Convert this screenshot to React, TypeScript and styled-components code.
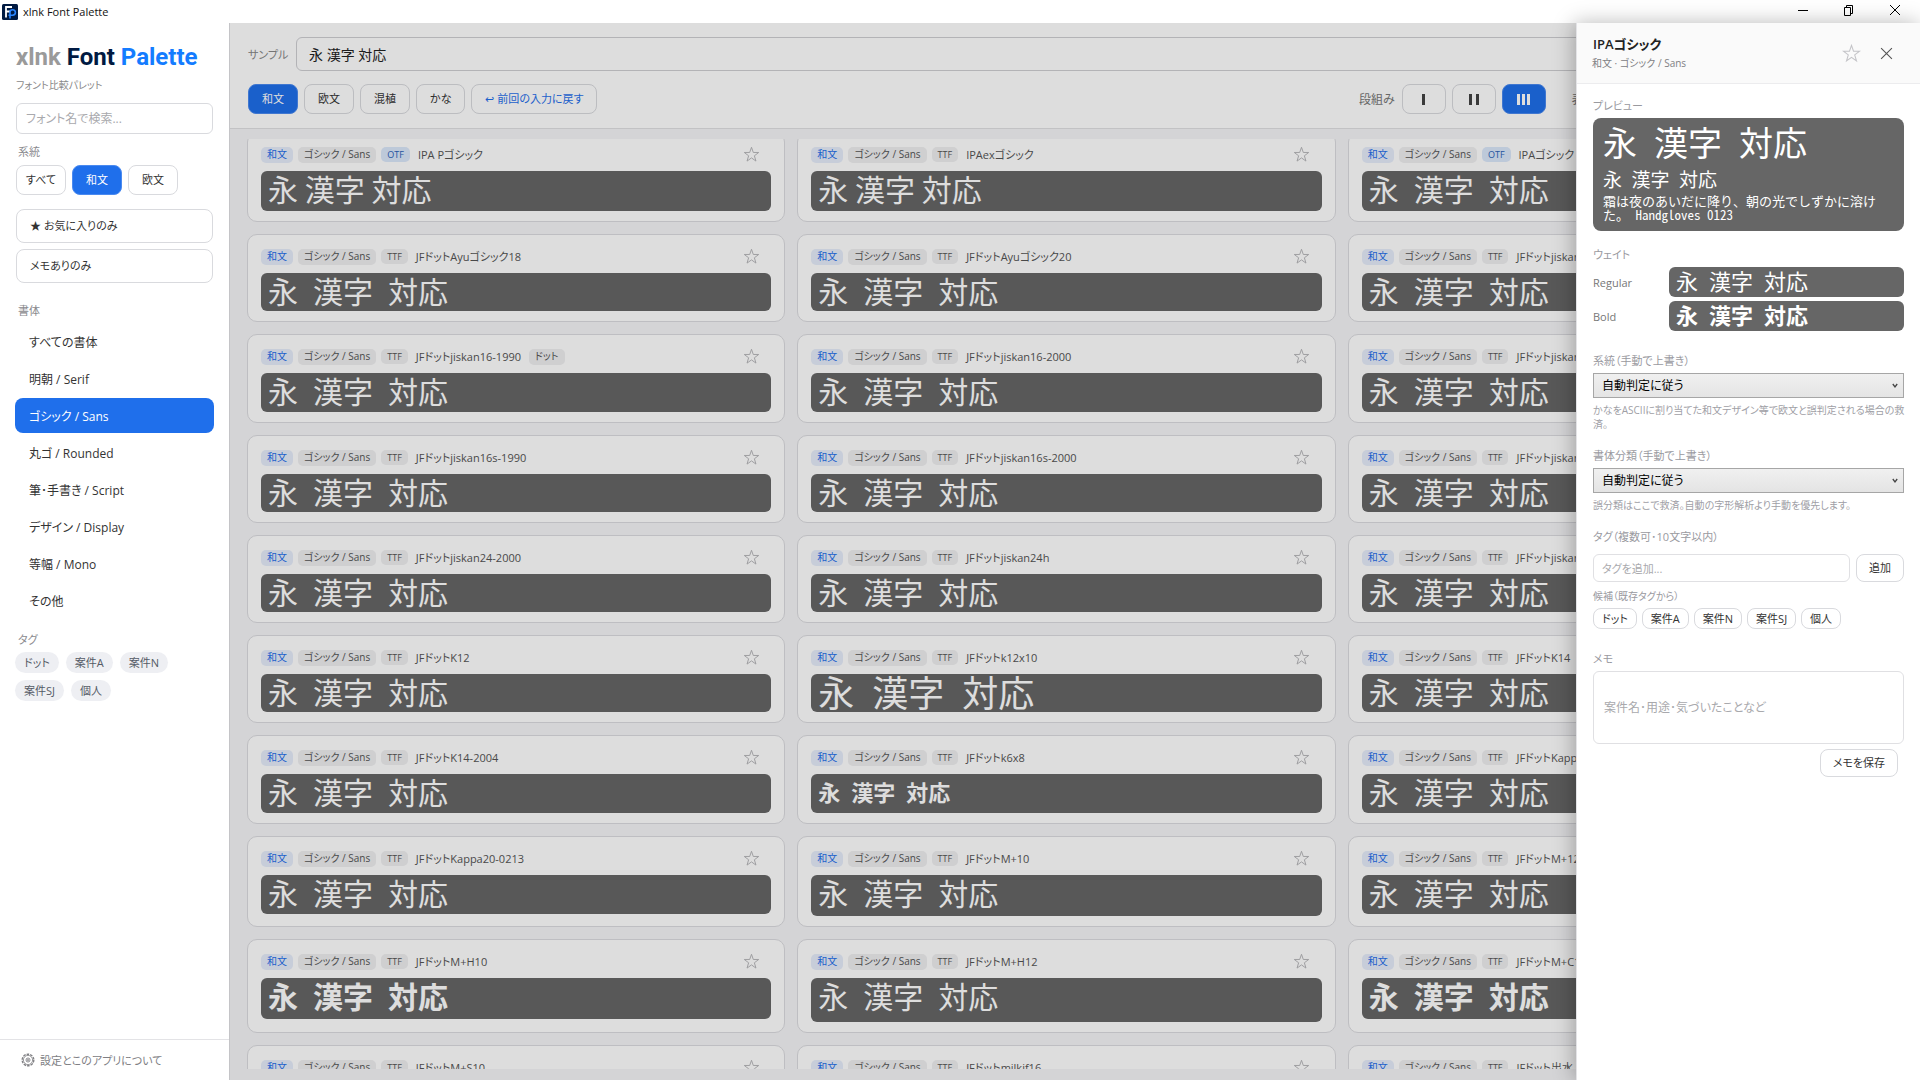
import React, { useLayoutEffect, useRef } from 'react';
import styled, { createGlobalStyle, css } from 'styled-components';

const ui = `'Open Sans', 'Noto Sans CJK JP', sans-serif`;
const monoSample = `'Noto Sans Mono CJK JP', 'Noto Sans CJK JP', sans-serif`;
const proportionalSample = `'Noto Sans CJK JP', sans-serif`;

const GlobalStyle = createGlobalStyle`
  *, *::before, *::after { box-sizing: border-box; }
  body { margin: 0; background: #fff; overflow: hidden; }
  body, button, input, select, textarea {
    font-family: ${ui};
    font-feature-settings: 'palt';
  }
  h1, h2, p { margin: 0; }
`;

/* ---------- window ---------- */

const Window = styled.div`
  display: flex;
  flex-direction: column;
  height: 100vh;
  color: #333;
  font-size: 12px;
`;

const TitleBar = styled.header`
  display: flex;
  align-items: center;
  flex: none;
  height: 23px;
  padding: 0 2px;
  gap: 5px;
  font-size: 11px;
  color: #111;
`;

const WindowButtons = styled.div`
  display: flex;
  margin-left: auto;
`;

const WindowButton = styled.button`
  display: grid;
  place-items: center;
  width: 46px;
  height: 23px;
  padding: 0 0 3px;
  border: 0;
  background: none;
  color: #000;
`;

const Body = styled.div`
  position: relative;
  display: flex;
  flex: 1;
  min-height: 0;
`;

/* ---------- shared controls ---------- */

const Button = styled.button<{ $active?: boolean; $accent?: boolean }>`
  flex: none;
  height: 30px;
  padding: 0 13px;
  border: 1px solid #d9dade;
  border-radius: 8px;
  background: #fff;
  color: #333;
  font-size: 11px;
  line-height: 16px;
  white-space: nowrap;
  ${p => p.$accent && css`color: #1f6feb;`}
  ${p => p.$active && css`
    border-color: #4a8af0;
    background: #1f6feb;
    color: #fff;
  `}
`;

const Label = styled.div`
  font-size: 11px;
  line-height: 16px;
  color: #8a8a8e;
`;

/* ---------- sidebar ---------- */

const Sidebar = styled.aside`
  display: flex;
  flex-direction: column;
  flex: none;
  width: 230px;
  border-right: 1px solid #e3e3e6;
  background: #fff;
`;

const SidebarMain = styled.div`
  flex: 1;
  min-height: 0;
  padding: 20px 15px 0;
`;

const Brand = styled.h1`
  padding-left: 1px;
  font-family: Roboto, sans-serif;
  font-size: 24px;
  line-height: 28px;
  font-weight: 700;
  color: #9a9a9a;
  white-space: nowrap;
`;
const BrandDark = styled.span`color: #001a42;`;
const BrandBlue = styled.span`color: #147cff;`;

const Tagline = styled.p`
  padding-left: 1px;
  margin-top: 6px;
  font-size: 10px;
  line-height: 16px;
  color: #888;
`;

const SearchBox = styled.input`
  display: block;
  width: calc(100% - 2px);
  height: 31px;
  margin: 10px 1px;
  padding: 0 9px;
  border: 1px solid #d9dade;
  border-radius: 6px;
  outline: 0;
  font-size: 12px;
  &::placeholder { color: #a9a9ad; opacity: 1; }
`;

const SideLabel = styled(Label)`padding-left: 3px;`;

const ScriptRow = styled.div`
  display: grid;
  grid-template-columns: repeat(3, 50px);
  gap: 6px;
  margin: 5px 1px 14px;
  ${Button} { padding: 0; }
`;

const FilterButton = styled(Button)`
  display: block;
  width: calc(100% - 2px);
  height: 34px;
  margin: 0 1px 6px;
  text-align: left;
`;

const CategoryHeading = styled(SideLabel)`margin-top: 20px;`;

const CategoryList = styled.nav`
  display: flex;
  flex-direction: column;
  gap: 2px;
  margin: 5px 0 14px;
`;

const CategoryButton = styled.button<{ $active?: boolean }>`
  height: 35px;
  padding: 0 14px;
  border: 0;
  border-radius: 8px;
  background: ${p => (p.$active ? '#1f6feb' : 'transparent')};
  color: ${p => (p.$active ? '#fff' : '#333')};
  font-size: 12px;
  text-align: left;
`;

const TagCloud = styled.div`
  display: flex;
  flex-wrap: wrap;
  gap: 7px;
  margin-top: 4px;
`;

const CloudTag = styled.button`
  height: 21px;
  padding: 0 9px;
  border: 0;
  border-radius: 11px;
  background: #eeeff3;
  color: #555b66;
  font-size: 11px;
  line-height: 20px;
`;

const SettingsButton = styled.button`
  display: flex;
  align-items: center;
  gap: 5px;
  flex: none;
  height: 41px;
  padding: 0 21px;
  border: 0;
  border-top: 1px solid #e3e3e6;
  background: none;
  color: #808084;
  font-size: 11px;
`;

/* ---------- main ---------- */

const Main = styled.main`
  display: flex;
  flex-direction: column;
  flex: 1;
  min-width: 0;
  background: #f5f5f7;
`;

const Toolbar = styled.div`
  display: flex;
  flex-direction: column;
  gap: 13px;
  flex: none;
  height: 106px;
  padding: 14px 18px 0;
  border-bottom: 1px solid #e0e0e3;
  background: #fff;
`;

const ToolRow = styled.div`
  display: flex;
  align-items: center;
  gap: 6px;
`;

const SampleLabel = styled.label`
  flex: none;
  width: 42px;
  font-size: 11px;
  white-space: nowrap;
  color: #888;
`;

const SampleInput = styled.input`
  flex: 1;
  min-width: 0;
  height: 34px;
  padding: 0 12px;
  border: 1px solid #cfcfd3;
  border-radius: 6px;
  outline: 0;
  font-size: 14px;
  color: #222;
`;

const ColumnTools = styled.div`
  display: flex;
  align-items: center;
  gap: 6px;
  width: 543px;
  margin-left: auto;
  color: #777;
`;

const ColumnButton = styled(Button)`
  display: grid;
  place-items: center;
  width: 44px;
  padding: 0;
  color: ${p => (p.$active ? '#fff' : '#444')};
`;

const ToolText = styled.span<{ $far?: boolean }>`
  margin-left: ${p => (p.$far ? '20px' : '0')};
  padding-right: 1px;
`;

const Scroller = styled.div`
  flex: 1;
  min-height: 0;
  margin: 10px 0 11px;
  padding: 0 34px 0 17px;
  overflow: hidden;
`;

const CardGrid = styled.div`
  display: grid;
  grid-template-columns: repeat(3, minmax(0, 1fr));
  gap: 12px;
`;

const Card = styled.article`
  padding: 13px 13px 10px;
  border: 1px solid #dcdce0;
  border-radius: 10px;
  background: #fff;
`;

const CardHead = styled.div`
  display: flex;
  align-items: center;
  height: 17px;
  margin-bottom: 8px;
`;

const Chip = styled.span<{ $tone?: 'blue' | 'otf'; $small?: boolean }>`
  flex: none;
  height: ${p => (p.$small ? '15px' : '16px')};
  padding: 0 6px;
  margin-right: ${p => (p.$small ? '8px' : '5px')};
  border-radius: 5px;
  background: #efeff1;
  color: #555;
  font-size: ${p => (p.$small ? '9px' : '10px')};
  line-height: 15px;
  white-space: nowrap;
  ${p => p.$tone === 'blue' && css`background: #e6edfb; color: #1f6feb;`}
  ${p => p.$tone === 'otf' && css`background: #dbe8fb; color: #2a62b8;`}
  & + &:nth-child(3) { margin-left: 3px; }
`;

const FontName = styled.span`
  margin-right: 8px;
  color: #555;
  font-size: 11px;
  line-height: 16px;
  white-space: nowrap;
`;

const StarButton = styled.button`
  display: grid;
  place-items: center;
  width: 18px;
  height: 18px;
  margin: 0 11px 0 auto;
  padding: 0;
  border: 0;
  background: none;
  color: #b4b4b8;
`;

const Sample = styled.div<{ $h: number; $size?: number; $weight?: number; $proportional?: boolean }>`
  height: ${p => p.$h}px;
  padding: 0 7px;
  border-radius: 6px;
  background: #666;
  color: #fff;
  font-family: ${p => (p.$proportional ? proportionalSample : monoSample)};
  font-feature-settings: normal;
  font-size: ${p => p.$size ?? 30}px;
  font-weight: ${p => p.$weight ?? 400};
  line-height: 34px;
  white-space: nowrap;
`;

/* ---------- drawer ---------- */

const Scrim = styled.div`
  position: absolute;
  inset: 0 0 0 229px;
  background: rgba(0, 0, 0, 0.133);
`;

const Drawer = styled.aside`
  position: absolute;
  top: 0;
  right: 0;
  bottom: 0;
  width: 344px;
  border-left: 1px solid #e3e3e6;
  background: #fff;
  box-shadow: -2px 0 20px rgba(0, 0, 0, 0.28);
`;

const DrawerHead = styled.div`
  display: flex;
  align-items: center;
  height: 61px;
  padding: 0 24px 0 15px;
  border-bottom: 1px solid #ececee;
  background: #fafafa;
`;

const DrawerTitles = styled.div`flex: 1;`;

const DrawerTitle = styled.h2`
  padding-left: 1px;
  font-size: 13px;
  line-height: 19px;
  font-weight: 600;
  color: #222;
`;

const DrawerSub = styled.p`
  font-size: 10px;
  line-height: 18px;
  color: #808084;
`;

const IconButton = styled.button<{ $faint?: boolean }>`
  display: grid;
  place-items: center;
  width: 20px;
  height: 20px;
  margin-left: 15px;
  padding: 0;
  border: 0;
  background: none;
  color: ${p => (p.$faint ? '#c4c4c8' : '#555')};
`;

const DrawerBody = styled.div`
  display: flex;
  flex-direction: column;
  padding: 14px 16px;
`;

const DrawerLabel = styled.label`
  display: block;
  font-size: 11px;
  line-height: 16px;
  color: #9a9a9f;
`;

const PreviewBox = styled.div`
  height: 113px;
  margin: 4px 0 16px;
  padding: 3px 10px;
  border-radius: 8px;
  background: #666;
  color: #fff;
  font-family: ${monoSample};
  font-feature-settings: normal;
`;

const PreviewLarge = styled.p`
  font-size: 34px;
  line-height: 42px;
`;
const PreviewMedium = styled.p`
  font-size: 19px;
  line-height: 31px;
`;
const PreviewSmall = styled.p`
  font-size: 13px;
  line-height: 14px;
`;

const WeightRow = styled.div`
  display: grid;
  grid-template-columns: 76px 1fr;
  align-items: center;
  margin-top: 4px;
  color: #777;
  font-size: 11px;
`;

const WeightSample = styled(Sample)`line-height: 27px;`;

const Section = styled.section<{ $wide?: boolean }>`
  margin-top: ${p => (p.$wide ? '22px' : '17px')};
`;

const SelectWrap = styled.div`
  display: grid;
  align-items: center;
  justify-items: end;
  margin: 4px 0 5px;
  & > * { grid-area: 1 / 1; }
  svg { margin-right: 6px; pointer-events: none; }
`;

const Select = styled.select`
  width: 100%;
  height: 25px;
  padding: 0 8px;
  border: 1px solid #a6a6a6;
  border-radius: 0;
  appearance: none;
  background: linear-gradient(#f0f0f0, #e4e4e4);
  color: #000;
  font-size: 12px;
`;

const Hint = styled.p`
  margin-right: -6px;
  font-size: 10px;
  line-height: 14px;
  color: #a0a0a6;
`;

const AddRow = styled.div`
  display: flex;
  gap: 6px;
  margin: 9px 0 6px;
`;

const TagInput = styled.input`
  flex: 1;
  min-width: 0;
  height: 28px;
  padding: 0 8px;
  border: 1px solid #e0e0e3;
  border-radius: 6px;
  outline: 0;
  font-size: 11px;
  &::placeholder { color: #a9a9ad; opacity: 1; }
`;

const SmallButton = styled(Button)`
  height: 28px;
  padding: 0 12px;
`;

const SuggestLabel = styled(DrawerLabel).attrs({ as: 'div' })`
  font-size: 10px;
`;

const SuggestRow = styled.div`
  display: flex;
  gap: 5px;
  margin-top: 4px;
`;

const SuggestTag = styled(Button)`
  height: 21px;
  padding: 0 8px;
  line-height: 18px;
`;

const Memo = styled.textarea`
  display: block;
  width: 100%;
  height: 73px;
  margin: 4px 0 5px;
  padding: 27px 10px 0;
  border: 1px solid #e0e0e3;
  border-radius: 6px;
  outline: 0;
  resize: none;
  font-size: 12px;
  line-height: 18px;
  &::placeholder { color: #a9a9ad; opacity: 1; }
`;

const SaveRow = styled.div`
  display: flex;
  justify-content: flex-end;
  padding-right: 6px;
`;

/* ---------- icons ---------- */

const AppIcon = () => (
  <svg width="16" height="16" viewBox="0 0 16 16" aria-hidden="true">
    <rect width="16" height="16" rx="1.5" fill="#001a42" />
    <path d="M4 13.5V3h6M4 7.5h4" fill="none" stroke="#fff" strokeWidth="1.8" />
    <path d="M8 14.5V8.2c0-1.5 1-2.4 2.6-2.4S13.400 7 13.400 8.600 12.200 11.200 10.600 11.200H6.500" fill="none" stroke="#2a86ff" strokeWidth="1.600" />
  </svg>
);

const Star = ({ size }: { size: number }) => (
  <svg width={size} height={size} viewBox="0 0 16 16" fill="none" stroke="currentColor" strokeWidth=".9" aria-hidden="true">
    <path d="M8 1.200l1.700 4.900h5.100l-4.100 3.100 1.500 5L8 11.200l-4.200 3 1.500-5-4.100-3.100h5.100z" />
  </svg>
);

const Bars = ({ count }: { count: number }) => {
  const pitch = count === 2 ? 7 : 5;
  const width = (count - 1) * pitch + 3;
  return (
    <svg width={width} height="11" viewBox={`0 0 ${width} 11`} fill="currentColor" aria-hidden="true">
      {Array.from({ length: count }, (_, i) => <rect key={i} x={i * pitch} width="3" height="11" />)}
    </svg>
  );
};

const Gear = () => (
  <svg width="14" height="14" viewBox="0 0 14 14" fill="none" stroke="currentColor" aria-hidden="true">
    <circle cx="7" cy="7" r="5.800" strokeWidth="1.400" strokeDasharray="2.600 1" />
    <circle cx="7" cy="7" r="4.600" strokeWidth=".8" />
    <circle cx="7" cy="7" r="2" strokeWidth=".9" />
    <circle cx="7" cy="7" r=".5" fill="currentColor" />
  </svg>
);

const Chevron = () => (
  <svg width="6" height="6" viewBox="0 0 6 6" fill="none" stroke="#444" strokeWidth="1.300" aria-hidden="true">
    <path d="M.8 1l2.200 3L5.200 1" />
  </svg>
);

const Cross = ({ size }: { size: number }) => (
  <svg width={size} height={size} viewBox="0 0 12 12" stroke="currentColor" aria-hidden="true">
    <path d="M1 1l10 10M11 1L1 11" />
  </svg>
);

/* ---------- data ---------- */

type FontItem = {
  name: string;
  h: number;
  format?: 'OTF';
  tag?: string;
  proportional?: boolean;
  size?: number;
  weight?: number;
};

const fonts: FontItem[] = [
  { name: 'IPA Pゴシック', h: 40, format: 'OTF', proportional: true },
  { name: 'IPAexゴシック', h: 40, proportional: true },
  { name: 'IPAゴシック', h: 40, format: 'OTF' },
  { name: 'JFドットAyuゴシック18', h: 38 },
  { name: 'JFドットAyuゴシック20', h: 38 },
  { name: 'JFドットjiskan16', h: 38 },
  { name: 'JFドットjiskan16-1990', h: 39, tag: 'ドット' },
  { name: 'JFドットjiskan16-2000', h: 39 },
  { name: 'JFドットjiskan16s', h: 39 },
  { name: 'JFドットjiskan16s-1990', h: 38 },
  { name: 'JFドットjiskan16s-2000', h: 38 },
  { name: 'JFドットjiskan24', h: 38 },
  { name: 'JFドットjiskan24-2000', h: 38 },
  { name: 'JFドットjiskan24h', h: 38 },
  { name: 'JFドットjiskan24s', h: 38 },
  { name: 'JFドットK12', h: 38 },
  { name: 'JFドットk12x10', h: 38, size: 36 },
  { name: 'JFドットK14', h: 38 },
  { name: 'JFドットK14-2004', h: 39 },
  { name: 'JFドットk6x8', h: 39, size: 22, weight: 700 },
  { name: 'JFドットKappa20', h: 39 },
  { name: 'JFドットKappa20-0213', h: 39 },
  { name: 'JFドットM+10', h: 41 },
  { name: 'JFドットM+12', h: 39 },
  { name: 'JFドットM+H10', h: 41, weight: 700 },
  { name: 'JFドットM+H12', h: 44 },
  { name: 'JFドットM+C10', h: 41, weight: 700 },
  { name: 'JFドットM+S10', h: 41 },
  { name: 'JFドットmilkjf16', h: 41 },
  { name: 'JFドット出水', h: 41 },
];

const categories = ['すべての書体', '明朝 / Serif', 'ゴシック / Sans', '丸ゴ / Rounded', '筆･手書き / Script', 'デザイン / Display', '等幅 / Mono', 'その他'];
const tags = ['ドット', '案件A', '案件N', '案件SJ', '個人'];
const sample = '永 漢字 対応';

const FontCard = ({ font }: { font: FontItem }) => (
  <Card>
    <CardHead>
      <Chip $tone="blue">和文</Chip>
      <Chip>ゴシック / Sans</Chip>
      <Chip $small $tone={font.format ? 'otf' : undefined}>{font.format ?? 'TTF'}</Chip>
      <FontName>{font.name}</FontName>
      {font.tag && <Chip>{font.tag}</Chip>}
      <StarButton aria-label="お気に入り"><Star size={17} /></StarButton>
    </CardHead>
    <Sample $h={font.h} $size={font.size} $weight={font.weight} $proportional={font.proportional}>
      {sample}
    </Sample>
  </Card>
);

export default function App() {
  const scroller = useRef<HTMLDivElement>(null);

  useLayoutEffect(() => {
    if (scroller.current) scroller.current.scrollTop = 7;
  }, []);

  return (
    <>
      <GlobalStyle />
      <Window>
        <TitleBar>
          <AppIcon />
          <span>xlnk Font Palette</span>
          <WindowButtons>
            <WindowButton aria-label="最小化">
              <svg width="10" height="10" stroke="currentColor"><path d="M0 5.500h10" /></svg>
            </WindowButton>
            <WindowButton aria-label="元に戻す">
              <svg width="10" height="11" fill="none" stroke="currentColor"><path d="M.5 2.500h6v8h-6zM2.500 2.500v-2h6v8h-2" /></svg>
            </WindowButton>
            <WindowButton aria-label="閉じる"><Cross size={12} /></WindowButton>
          </WindowButtons>
        </TitleBar>

        <Body>
          <Sidebar>
            <SidebarMain>
              <Brand>xlnk <BrandDark>Font</BrandDark> <BrandBlue>Palette</BrandBlue></Brand>
              <Tagline>フォント比較パレット</Tagline>
              <SearchBox aria-label="フォント名" placeholder="フォント名で検索..." />
              <SideLabel>系統</SideLabel>
              <ScriptRow>
                <Button>すべて</Button>
                <Button $active>和文</Button>
                <Button>欧文</Button>
              </ScriptRow>
              <FilterButton>★ お気に入りのみ</FilterButton>
              <FilterButton>メモありのみ</FilterButton>
              <CategoryHeading>書体</CategoryHeading>
              <CategoryList>
                {categories.map(c => (
                  <CategoryButton key={c} $active={c.startsWith('ゴシック')}>{c}</CategoryButton>
                ))}
              </CategoryList>
              <SideLabel>タグ</SideLabel>
              <TagCloud>
                {tags.map(t => <CloudTag key={t}>{t}</CloudTag>)}
              </TagCloud>
            </SidebarMain>
            <SettingsButton><Gear />設定とこのアプリについて</SettingsButton>
          </Sidebar>

          <Main>
            <Toolbar>
              <ToolRow>
                <SampleLabel htmlFor="sample">サンプル</SampleLabel>
                <SampleInput id="sample" defaultValue={sample} />
              </ToolRow>
              <ToolRow>
                <Button $active>和文</Button>
                <Button>欧文</Button>
                <Button>混植</Button>
                <Button>かな</Button>
                <Button $accent>↩ 前回の入力に戻す</Button>
                <ColumnTools>
                  <ToolText>段組み</ToolText>
                  <ColumnButton aria-label="1列"><Bars count={1} /></ColumnButton>
                  <ColumnButton aria-label="2列"><Bars count={2} /></ColumnButton>
                  <ColumnButton aria-label="3列" $active><Bars count={3} /></ColumnButton>
                  <ToolText $far>表示</ToolText>
                </ColumnTools>
              </ToolRow>
            </Toolbar>
            <Scroller ref={scroller}>
              <CardGrid>
                {fonts.map(f => <FontCard key={f.name} font={f} />)}
              </CardGrid>
            </Scroller>
          </Main>

          <Scrim />

          <Drawer>
            <DrawerHead>
              <DrawerTitles>
                <DrawerTitle>IPAゴシック</DrawerTitle>
                <DrawerSub>和文 · ゴシック / Sans</DrawerSub>
              </DrawerTitles>
              <IconButton $faint aria-label="お気に入り"><Star size={19} /></IconButton>
              <IconButton aria-label="閉じる"><Cross size={13} /></IconButton>
            </DrawerHead>
            <DrawerBody>
              <DrawerLabel as="div">プレビュー</DrawerLabel>
              <PreviewBox>
                <PreviewLarge>{sample}</PreviewLarge>
                <PreviewMedium>{sample}</PreviewMedium>
                <PreviewSmall>霜は夜のあいだに降り、朝の光でしずかに溶けた。 Handgloves 0123</PreviewSmall>
              </PreviewBox>
              <DrawerLabel as="div">ウェイト</DrawerLabel>
              <WeightRow>Regular<WeightSample $h={30} $size={22}>{sample}</WeightSample></WeightRow>
              <WeightRow>Bold<WeightSample $h={30} $size={22} $weight={700}>{sample}</WeightSample></WeightRow>

              <Section $wide>
                <DrawerLabel htmlFor="script">系統（手動で上書き）</DrawerLabel>
                <SelectWrap>
                  <Select id="script"><option>自動判定に従う</option></Select>
                  <Chevron />
                </SelectWrap>
                <Hint>かなをASCIIに割り当てた和文デザイン等で欧文と誤判定される場合の救済。</Hint>
              </Section>

              <Section>
                <DrawerLabel htmlFor="category">書体分類（手動で上書き）</DrawerLabel>
                <SelectWrap>
                  <Select id="category"><option>自動判定に従う</option></Select>
                  <Chevron />
                </SelectWrap>
                <Hint>誤分類はここで救済。自動の字形解析より手動を優先します。</Hint>
              </Section>

              <Section>
                <DrawerLabel htmlFor="tag">タグ（複数可･10文字以内）</DrawerLabel>
                <AddRow>
                  <TagInput id="tag" placeholder="タグを追加..." />
                  <SmallButton>追加</SmallButton>
                </AddRow>
                <SuggestLabel>候補（既存タグから）</SuggestLabel>
                <SuggestRow>
                  {tags.map(t => <SuggestTag key={t}>{t}</SuggestTag>)}
                </SuggestRow>
              </Section>

              <Section $wide>
                <DrawerLabel htmlFor="memo">メモ</DrawerLabel>
                <Memo id="memo" placeholder="案件名･用途･気づいたことなど" />
                <SaveRow><SmallButton>メモを保存</SmallButton></SaveRow>
              </Section>
            </DrawerBody>
          </Drawer>
        </Body>
      </Window>
    </>
  );
}
